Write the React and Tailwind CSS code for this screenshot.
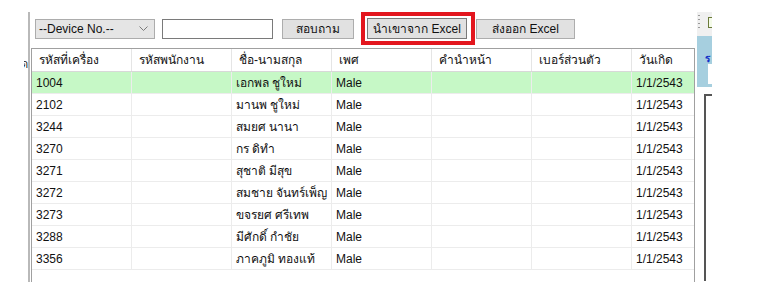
import React from 'react'

const columns = [
  { label: 'รหัสที่เครื่อง', w: 'w-[100px]' },
  { label: 'รหัสพนักงาน', w: 'w-[100px]' },
  { label: 'ชื่อ-นามสกุล', w: 'w-[100px]' },
  { label: 'เพศ', w: 'w-[100px]' },
  { label: 'คำนำหน้า', w: 'w-[100px]' },
  { label: 'เบอร์ส่วนตัว', w: 'w-[100px]' },
  { label: 'วันเกิด', w: 'w-[62px]' },
]

const rows = [
  ['1004', '', 'เอกพล ชูใหม่', 'Male', '', '', '1/1/2543'],
  ['2102', '', 'มานพ ชูใหม่', 'Male', '', '', '1/1/2543'],
  ['3244', '', 'สมยศ นานา', 'Male', '', '', '1/1/2543'],
  ['3270', '', 'กร ดิทำ', 'Male', '', '', '1/1/2543'],
  ['3271', '', 'สุชาติ มีสุข', 'Male', '', '', '1/1/2543'],
  ['3272', '', 'สมชาย จันทร์เพ็ญ', 'Male', '', '', '1/1/2543'],
  ['3273', '', 'ขจรยศ ศรีเทพ', 'Male', '', '', '1/1/2543'],
  ['3288', '', 'มีศักดิ์ กำชัย', 'Male', '', '', '1/1/2543'],
  ['3356', '', 'ภาคภูมิ ทองแท้', 'Male', '', '', '1/1/2543'],
]

const WinButton = ({ children, className = '' }) => (
  <button
    className={`h-[20px] bg-[#e1e1e1] border border-[#adadad] text-[12px] text-[#111] flex items-center justify-center ${className}`}
  >
    {children}
  </button>
)

export default function App() {
  return (
    <div
      className="w-[759px] h-[298px] bg-white flex overflow-hidden text-[#111]"
      style={{ fontFamily: '"Liberation Sans", "DejaVu Sans", sans-serif' }}
    >
      {/* left margin with clipped label */}
      <div className="w-[28px] flex justify-end pt-[57px]">
        <div className="w-[4px] h-[14px] overflow-hidden flex justify-end">
          <span className="text-[11px] leading-[14px]">ด</span>
        </div>
      </div>

      {/* main panel */}
      <div className="w-[669px] flex flex-col">
        <div className="h-[270px] mt-[12px] border-l-[2px] border-[#b9b9b9] pl-[1px] flex flex-col">
          {/* toolbar */}
          <div className="h-[33px] flex items-center">
            <div className="ml-[4px] w-[120px] h-[20px] bg-[#e5e5e5] border border-[#acacac] flex items-center justify-between pl-[3px] pr-[6px] text-[12px]">
              <span>--Device No.--</span>
              <svg width="9" height="6" viewBox="0 0 9 6">
                <polyline points="0.5,0.5 4.5,4.5 8.5,0.5" fill="none" stroke="#7a7a7a" strokeWidth="1" />
              </svg>
            </div>
            <div className="ml-[7px] w-[111px] h-[20px] bg-white border border-[#7a7a7a]" />
            <WinButton className="ml-[9px] w-[72px]">สอบถาม</WinButton>
            <div className="ml-[7px] w-[114px] h-[33px] border-[4px] border-[#e3161e] p-[2px]">
              <WinButton className="w-[100px] !h-[21px] !border-[#7a7a7a]">นำเขาจาก Excel</WinButton>
            </div>
            <WinButton className="ml-[1px] w-[99px]">ส่งออก Excel</WinButton>
          </div>

          {/* grid */}
          <div className="mt-[3px] flex-1 w-[664px] border-l border-r border-t border-[#a0a0a0] text-[12px]">
            <div className="h-[23px] flex border-b border-[#d8d8d8]">
              {columns.map((c, i) => (
                <div
                  key={i}
                  className={`${c.w} shrink-0 pl-[7px] flex items-center ${i < columns.length - 1 ? 'border-r border-[#e5e5e5]' : ''}`}
                >
                  {c.label}
                </div>
              ))}
            </div>
            {rows.map((r, ri) => (
              <div
                key={ri}
                className={`h-[22px] flex border-b border-[#ececec] ${ri === 0 ? 'bg-[#c6f8c6]' : ''}`}
              >
                {r.map((cell, ci) => (
                  <div
                    key={ci}
                    className={`${columns[ci].w} shrink-0 pl-[4px] flex items-center whitespace-nowrap ${ci < columns.length - 1 ? 'border-r border-[#ececec]' : ''}`}
                  >
                    {cell}
                  </div>
                ))}
              </div>
            ))}
          </div>
        </div>
      </div>

      {/* right panel strip */}
      <div className="w-[15px] flex flex-col">
        <div className="h-[12px]" />
        <div className="h-[24px] bg-[#f0f0f0] flex items-start">
          <div className="w-[4px] pt-[3px] pl-[1px] flex flex-col gap-[3px]">
            <div className="w-[2px] h-[1px] bg-[#9a9a9a]" />
            <div className="w-[2px] h-[1px] bg-[#9a9a9a]" />
            <div className="w-[2px] h-[1px] bg-[#9a9a9a]" />
            <div className="w-[2px] h-[1px] bg-[#9a9a9a]" />
          </div>
          <div className="ml-[7px] mt-[5px] w-[4px] h-[11px] border-l border-t border-b border-[#6b7a3a] bg-[#f4fbe9]" />
        </div>
        <div className="h-[51px] bg-[#a6cfdf] flex flex-col">
          <div className="pl-[8px] pt-[9px] h-[28px]">
            <span className="text-[10px] font-bold text-[#1030c8] leading-[10px]">ร</span>
          </div>
          <div className="ml-[11px] w-[4px] h-[20px] bg-white" />
        </div>
        <div className="flex-1 bg-white flex flex-col">
          <div className="h-[187px] mt-[7px] ml-[7px] border-l-[2px] border-t-[2px] border-[#555]" />
        </div>
      </div>
      <div className="flex-1 bg-white" />
    </div>
  )
}
